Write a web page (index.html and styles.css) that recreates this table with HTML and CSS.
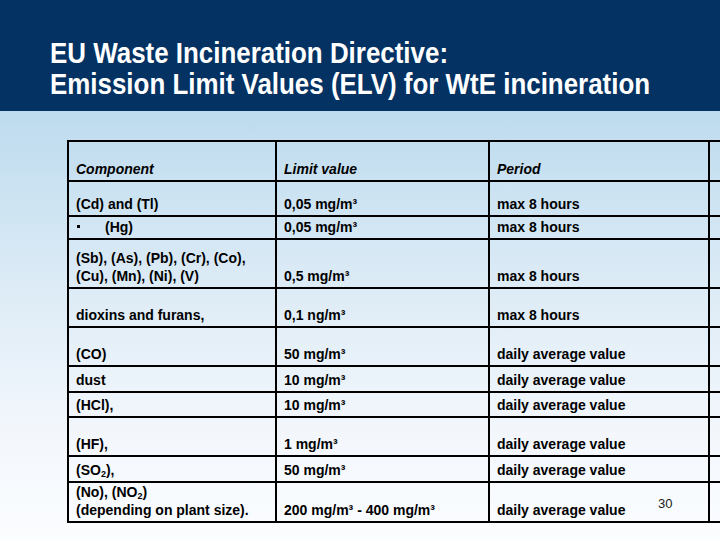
FILE: index.html
```html
<!DOCTYPE html>
<html lang="en">
<head>
<meta charset="utf-8">
<title>EU Waste Incineration Directive</title>
<link rel="stylesheet" href="styles.css">
</head>
<body>
<div class="slide">
  <header class="title-bar">
    <h1 class="title">EU Waste Incineration Directive:<br>Emission Limit Values (ELV) for WtE incineration</h1>
  </header>
  <main class="content">
    <table class="elv">
      <colgroup>
        <col class="c-comp">
        <col class="c-limit">
        <col class="c-period">
        <col class="c-edge">
      </colgroup>
      <tr class="h40 head"><th>Component</th><th>Limit value</th><th>Period</th><td></td></tr>
      <tr class="h35"><td>(Cd) and (Tl)</td><td>0,05 mg/m³</td><td>max 8 hours</td><td></td></tr>
      <tr class="h23"><td><span class="bullet"></span>(Hg)</td><td>0,05 mg/m³</td><td>max 8 hours</td><td></td></tr>
      <tr class="h49"><td>(Sb), (As), (Pb), (Cr), (Co),<br>(Cu), (Mn), (Ni), (V)</td><td>0,5 mg/m³</td><td>max 8 hours</td><td></td></tr>
      <tr class="h39"><td>dioxins and furans,</td><td>0,1 ng/m³</td><td>max 8 hours</td><td></td></tr>
      <tr class="h39"><td>(CO)</td><td>50 mg/m³</td><td>daily average value</td><td></td></tr>
      <tr class="h26"><td>dust</td><td>10 mg/m³</td><td>daily average value</td><td></td></tr>
      <tr class="h25"><td>(HCl),</td><td>10 mg/m³</td><td>daily average value</td><td></td></tr>
      <tr class="h39"><td>(HF),</td><td>1 mg/m³</td><td>daily average value</td><td></td></tr>
      <tr class="h26"><td>(SO<sub>2</sub>),</td><td>50 mg/m³</td><td>daily average value</td><td></td></tr>
      <tr class="h40"><td>(No), (NO<sub>2</sub>)<br>(depending on plant size).</td><td>200 mg/m³ - 400 mg/m³</td><td>daily average value</td><td></td></tr>
    </table>
  </main>
  <span class="page-no">30</span>
</div>
</body>
</html>
```

FILE: styles.css
```css
html, body {
  margin: 0;
  padding: 0;
}

body {
  width: 720px;
  height: 540px;
  overflow: hidden;
  font-family: "Liberation Sans", Arial, sans-serif;
}

.slide {
  position: relative;
  width: 720px;
  height: 540px;
  overflow: hidden;
}

.title-bar {
  height: 111px;
  box-sizing: border-box;
  background: #033263;
  padding: 37px 0 0 50px;
}

.title {
  margin: 0;
  color: #ffffff;
  font-family: "Liberation Sans", Arial, sans-serif;
  font-weight: bold;
  font-size: 30px;
  line-height: 31px;
  white-space: nowrap;
  transform: scaleX(0.864);
  transform-origin: left top;
}

.content {
  height: 429px;
  box-sizing: border-box;
  padding: 29px 0 0 67px;
  overflow: hidden;
  background: linear-gradient(to bottom, #bddbee 0%, #dcebf6 40%, #f3f7fc 75%, #fbfdff 100%);
}

.elv {
  table-layout: fixed;
  width: 703px;
  border-collapse: separate;
  border-spacing: 0;
  border-top: 2px solid #000;
  border-left: 2px solid #000;
  font-size: 14px;
  font-weight: bold;
  color: #000;
}

.c-comp { width: 208px; }
.c-limit { width: 213px; }
.c-period { width: 220px; }
.c-edge { width: 60px; }

.elv th,
.elv td {
  box-sizing: border-box;
  border-right: 2px solid #000;
  border-bottom: 2px solid #000;
  padding: 0 4px 2px 7px;
  vertical-align: bottom;
  text-align: left;
  line-height: 18px;
  white-space: nowrap;
}

.elv .head th {
  font-style: italic;
  font-weight: bold;
}

.h23 { height: 23px; }
.h25 { height: 25px; }
.h26 { height: 26px; }
.h35 { height: 35px; }
.h39 { height: 39px; }
.h40 { height: 40px; }
.h49 { height: 49px; }

.elv sub {
  font-size: 9px;
  line-height: 0;
  vertical-align: -2px;
}

.bullet {
  display: inline-block;
  width: 3px;
  height: 3px;
  background: #000;
  margin: 0 25px 0 1px;
  vertical-align: 4px;
}

.page-no {
  position: absolute;
  left: 658px;
  top: 496px;
  font-size: 13px;
  line-height: 15px;
  color: #1a1a1a;
}
```
